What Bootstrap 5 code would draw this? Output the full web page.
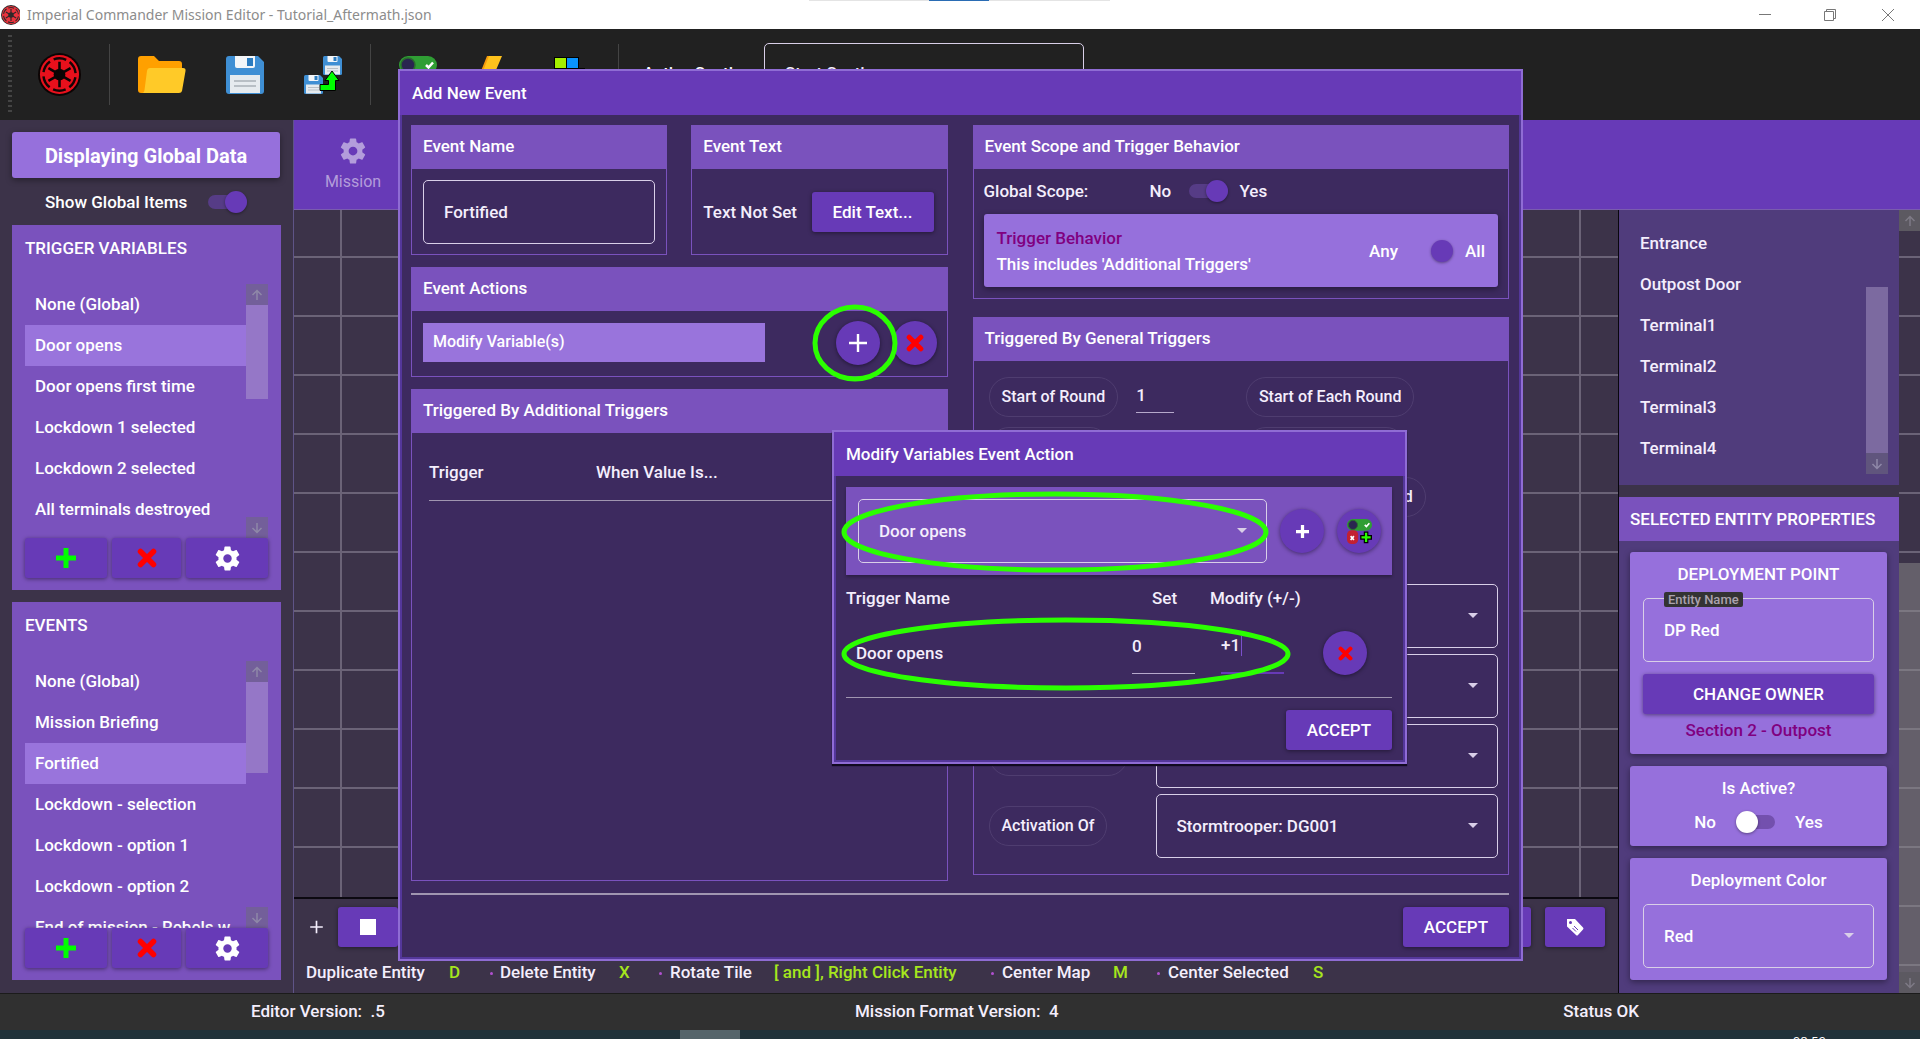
<!DOCTYPE html>
<html lang="en" data-bs-theme="dark">
<head>
<meta charset="utf-8">
<meta name="viewport" content="width=device-width, initial-scale=1">
<title>Imperial Commander Mission Editor</title>
<link href="https://cdn.jsdelivr.net/npm/bootstrap@5.3.0/dist/css/bootstrap.min.css" rel="stylesheet">
<style>
:root{--deep:#673ab7;--mid:#7a52bd;--lite:#9670dc;--panel:#3d2a5f;--base:#3c3349;--side:#503c7c}
body{font-family:Roboto,"Liberation Sans",sans-serif;font-weight:500;font-size:17px;line-height:24px;color:#f4eefc;background:var(--base);min-height:100vh;overflow:hidden}
button,input,select{font:inherit;color:inherit}
svg{display:block;flex:none}
.titlebar{height:29px;background:#fff;color:#8c8c8c;font:400 14px/24px "Noto Sans","Open Sans",sans-serif;gap:7px;padding-right:3px}
.tb-peek{left:809px;top:0;width:301px;height:1px;background:#e4e4e4}
.tb-peek i{position:absolute;left:120px;width:60px;height:1px;background:#2a6cb4}
.winbtn{width:58px;height:29px;background:none;border:0;padding:0;color:#777;margin-left:-7px}
.toolbar{height:91px;background:#212121}
.grip{width:4px;height:80px;background:repeating-linear-gradient(#444 0 2px,transparent 2px 5px)}
.vsep{width:1px;height:61px;background:#444}
.iconbtn{background:none;border:0;padding:0}
.tool-home{width:97px;padding-right:2px}
.tool-files{width:260px;padding:0 28px}
.tool-items{width:247px;padding:0 33px 0 28px}
.outlined{border:1px solid #d9cfe8;border-radius:5px;background:transparent;height:64px;padding:0 20px;width:100%;outline:0;display:block;appearance:none}
.pick{position:relative;display:block}
.pick::after{content:"";position:absolute;right:20px;top:50%;margin-top:-3px;border:5px solid transparent;border-top-color:#d9cfe8;border-bottom:0}
.pick option{background:var(--panel)}
.section-pick{width:320px}
.section-pick .outlined{padding-bottom:4px}
.section-label{width:145px;padding:0 0 4px 24px}
.left-side{width:294px;border-right:1px solid #5f5487;padding:12px 13px 0 12px}
.raised{background:var(--lite);border-radius:3px;box-shadow:0 2px 6px rgba(0,0,0,.4)}
.btn-deep{background:var(--deep);border:0;border-radius:3px;height:40px;color:#fff;box-shadow:0 1px 4px rgba(0,0,0,.45);padding:0 21px}
.round{width:44px;height:44px;border-radius:50%;padding:0;flex:none}
.banner{height:46px;font-size:20px;font-weight:700;color:#fff;padding-top:2px}
.global-row{height:47px;padding:0 33px}
.tog{appearance:none;position:relative;width:39px;height:22px;margin:0;flex:none}
.tog::before{content:"";position:absolute;left:0;right:0;top:4px;height:14px;border-radius:7px;background:#563c86}
.tog::after{content:"";position:absolute;top:0;left:0;width:22px;height:22px;border-radius:50%;background:#fff;box-shadow:0 1px 3px rgba(0,0,0,.4)}
.tog:checked::after{left:17px;background:var(--deep)}
.tog-off::before{background:#7350ae}
.tog-bare::before{background:transparent}
.box{width:269px;background:var(--mid);color:#fff;margin-bottom:12px;padding-bottom:12px}
.box-title{height:46px;padding:0 13px;color:#fff;font-size:17px}
.listarea{margin:13px 13px 0;height:254px;overflow:hidden}
.listarea-b{height:267px}
.entry{height:41px;padding:0 10px;white-space:nowrap;overflow:hidden;line-height:40px}
.entry.sel{background:#9974dc}
.sbar{width:22px;flex:none}
.sbtn{height:21px;background:rgba(110,105,125,.55);color:#8f88a8}
.sthumb{background:rgba(190,175,215,.4)}
.rowbtns{gap:5px;padding:0 13px}
.wide-b{width:82px}
.tabs{height:90px;background:var(--deep);color:#b39ddb;font-weight:400;font-size:16px;border-bottom:1px solid #7a5cae}
.tab-item{width:118px;gap:4px}
.gridmap{background-color:var(--base);background-image:linear-gradient(#6b6377 2px,transparent 2px),linear-gradient(90deg,#6b6377 2px,transparent 2px);background-size:59px 59px;background-position:46px 46px;border-bottom:2px solid #0c0911}
.canvas-tools{height:56px;padding:0 13px 0 15px;gap:14px}
.canvas-tools .btn-deep{width:60px}
.strip{width:21px;background-color:var(--base);background-image:linear-gradient(#6b6377 2px,transparent 2px);background-size:59px 59px;background-position:0 46px}
.strip .thumb2{background:rgba(140,140,140,.5)}
.sgrey{height:21px;background:#5c5961;color:#7e7a86}
.right-side{width:281px;border-left:1px solid #08060c}
.side-sec{background:var(--side)}
.side-list{height:275px;padding:13px 11px 11px}
.side-title{height:44px;background:var(--mid);padding:0 11px 1px;color:#fff}
.side-cards{padding:11px 12px 0 11px;gap:12px}
.side-card{padding:10px 13px 12px 13px}
.keys{height:38px;padding:0 0 4px 12px}
.keys b{color:#a6e61d;font-weight:500}
.keys i{width:3px;height:3px;border-radius:50%;background:#b050d0;margin-top:2px}
.tagline{position:absolute;left:21px;top:-2px;background:#333;color:#aaa2ad;font-size:13px;line-height:15px;padding:0 4px;border-radius:2px}
.plum{color:#800080}
.statusbar{height:37px;background:#303030;border-top:1px solid #1b1b1b;padding-bottom:2px}
.taskbar{height:9px;background:#21323a;overflow:hidden;position:relative}
.taskbar i{position:absolute;left:680px;width:60px;height:9px;background:#56646a}
.taskbar span{position:absolute;right:94px;top:4px;font:400 13px/15px "Open Sans",sans-serif;color:#fff}
.win{position:absolute;background:var(--panel);border:2px solid #8f6cd4;box-shadow:inset 0 0 0 2px #54379a}
.win-main{left:398px;right:397px;top:69px}
.win-sub{left:832px;top:430px;width:575px;box-shadow:inset 0 0 0 2px #54379a,0 2px 1px #110a20}
.win-head{height:44px;background:var(--deep);padding:0 12px 1px;color:#fff}
.win-body{padding:10px 12px 12px 11px}
.grp{border:1px solid var(--mid)}
.grp-title{height:43px;background:var(--mid);padding:0 11px 3px;color:#fff}
.half{flex:1 1 0}
.chip{height:40px;border:1px solid #4f3d70;border-radius:20px;background:none;padding:0 12px;font-size:16px;white-space:nowrap}
.chip-cell{width:51%;padding-left:5px}
.chip-cell-sm{width:172px;padding-left:5px}
.picked{background:#9974dc;width:342px;height:39px;line-height:38px;padding-left:10px;font-size:16px;color:#fff}
.uline{background:none;border:0;border-bottom:1px solid #b6a9cb;padding:0;outline:0}
.uline-lg{width:63px;height:54px;padding-bottom:2px;margin-bottom:12px}
.active-field{position:relative;margin-left:26px}
.active-field .uline{border-bottom:2px solid var(--deep)}
.active-field::after{content:"";position:absolute;left:20px;top:16px;width:1px;height:20px;background:#7b50cc}
.bar2{height:2px;background:#a095b0;margin:12px 0}
.bar1{height:1px;background:#a095b0;margin:12px 0}
.ring{position:absolute;pointer-events:none;overflow:visible}
.ring ellipse{fill:none;stroke:#2bff00;stroke-width:5}
.ring-a{right:50px;top:-6px}
.ring-b{left:7px;top:60px}
.ring-c{left:7px;top:186px}
</style>
<script src="https://cdn.jsdelivr.net/npm/bootstrap@5.3.0/dist/js/bootstrap.bundle.min.js"></script>
</head>
<body class="d-flex flex-column position-relative">
<svg width="0" height="0" class="position-absolute">
<symbol id="gear" viewBox="0 0 24 24"><path fill="currentColor" d="M12,15.5A3.5,3.5 0 0,1 8.5,12A3.5,3.5 0 0,1 12,8.5A3.5,3.5 0 0,1 15.5,12A3.5,3.5 0 0,1 12,15.5M19.43,12.97C19.47,12.65 19.5,12.33 19.5,12C19.5,11.67 19.47,11.34 19.43,11L21.54,9.37C21.73,9.22 21.78,8.95 21.66,8.73L19.66,5.27C19.54,5.05 19.27,4.96 19.05,5.05L16.56,6.05C16.04,5.66 15.5,5.32 14.87,5.07L14.5,2.42C14.46,2.18 14.25,2 14,2H10C9.75,2 9.54,2.18 9.5,2.42L9.13,5.07C8.5,5.32 7.96,5.66 7.44,6.05L4.95,5.05C4.73,4.96 4.46,5.05 4.34,5.27L2.34,8.73C2.21,8.95 2.27,9.22 2.46,9.37L4.57,11C4.53,11.34 4.5,11.67 4.5,12C4.5,12.33 4.53,12.65 4.57,12.97L2.46,14.63C2.27,14.78 2.21,15.05 2.34,15.27L4.34,18.73C4.46,18.95 4.73,19.03 4.95,18.95L7.44,17.94C7.96,18.34 8.5,18.68 9.13,18.93L9.5,21.58C9.54,21.82 9.75,22 10,22H14C14.25,22 14.46,21.82 14.5,21.58L14.87,18.93C15.5,18.67 16.04,18.34 16.56,17.94L19.05,18.95C19.27,19.03 19.54,18.95 19.66,18.73L21.66,15.27C21.78,15.05 21.73,14.78 21.54,14.63L19.43,12.97Z"/></symbol>
<symbol id="plus" viewBox="0 0 20 20"><path d="M10 0V20M0 10H20" stroke="currentColor" stroke-width="5"/></symbol>
<symbol id="thin" viewBox="0 0 20 20"><path d="M10 1V19M1 10H19" stroke="currentColor" stroke-width="2.400"/></symbol>
<symbol id="cross" viewBox="0 0 20 20"><path d="M3.500 3.500L16.500 16.500M16.500 3.500L3.500 16.500" stroke="red" stroke-width="5.500" stroke-linecap="round"/></symbol>
<symbol id="up" viewBox="0 0 12 12"><path d="M6 11V2M1.500 6L6 1.500L10.500 6" fill="none" stroke="currentColor" stroke-width="1.500"/></symbol>
<symbol id="down" viewBox="0 0 12 12"><path d="M6 1V10M1.500 6L6 10.500L10.500 6" fill="none" stroke="currentColor" stroke-width="1.500"/></symbol>
<symbol id="disk" viewBox="0 0 38 38"><path fill="#3f8fd4" d="M3 0H32L38 6V35Q38 38 35 38H3Q0 38 0 35V3Q0 0 3 0Z"/><path fill="#f3f6f9" d="M9 0H29V10Q29 12 27 12H11Q9 12 9 10Z"/><path fill="#2c7cc0" d="M21 2H27V10H21Z"/><path fill="#e6ebef" d="M4 19H34V37H4Z"/><path stroke="#a9b1b8" stroke-width="1.500" d="M8 25H30M8 30H30"/></symbol>
<symbol id="emblem" viewBox="0 0 44 44"><circle cx="22" cy="22" r="22" fill="#0c0404"/><circle cx="22" cy="22" r="20" fill="#e8101c"/><circle cx="22" cy="22" r="16.500" fill="none" stroke="#140506" stroke-width="2.500" stroke-dasharray="13 4.280" stroke-dashoffset="6.500" transform="rotate(30 22 22)"/><circle cx="22" cy="22" r="6" fill="#0c0404"/><path stroke="#0c0404" stroke-width="2.600" d="M22 9V35M10.700 15.500L33.300 28.500M10.700 28.500L33.300 15.500"/></symbol>
<symbol id="toggler" viewBox="0 0 38 38"><rect width="38" height="18" rx="9" fill="#2f9e34"/><circle cx="9" cy="9" r="7" fill="#2a2550" stroke="#2b6b2e" stroke-width="1.500"/><path d="M27 9L29.500 11.500L34 6.500" fill="none" stroke="#fff" stroke-width="2.500"/><rect x="0" y="17" width="17" height="21" rx="7" fill="#c32032"/><path d="M5.500 26L10.500 32M10.500 26L5.500 32" stroke="#fff" stroke-width="2.500"/><path d="M29 19V37M20 28H38" stroke="#000" stroke-width="7"/><path d="M29 21V35M22 28H36" stroke="#2bff00" stroke-width="3.500"/></symbol>
</svg>

<header class="titlebar d-flex align-items-center position-relative">
  <svg width="20" height="20"><use href="#emblem" x="1" width="20" height="20" opacity=".85"/></svg>
  <span class="flex-grow-1">Imperial Commander Mission Editor - Tutorial_Aftermath.json</span>
  <div class="tb-peek position-absolute"><i></i></div>
  <button class="winbtn d-flex align-items-center justify-content-center" aria-label="Minimize"><svg width="12" height="12"><path d="M0 5.500H12" stroke="currentColor"/></svg></button>
  <button class="winbtn d-flex align-items-center justify-content-center ms-0" aria-label="Restore"><svg width="12" height="12" fill="none" stroke="currentColor"><path d="M.5 2.500H9.500V11.500H.5ZM2.500 2V.5H11.500V9.500H10"/></svg></button>
  <button class="winbtn d-flex align-items-center justify-content-center" aria-label="Close"><svg width="12" height="12" stroke="currentColor"><path d="M0 0L12 12M12 0L0 12"/></svg></button>
</header>

<nav class="toolbar d-flex align-items-center ps-2">
  <div class="grip"></div>
  <div class="tool-home d-flex align-items-center justify-content-center"><button class="iconbtn" aria-label="Home"><svg width="43" height="43"><use href="#emblem"/></svg></button></div>
  <div class="vsep"></div>
  <div class="tool-files d-flex align-items-center justify-content-between">
    <button class="iconbtn" aria-label="Open"><svg width="48" height="38" viewBox="0 0 48 38"><path fill="#ffa000" d="M3 0H16L21 5H41Q44 5 44 8V20L8 37H3Q0 37 0 34V3Q0 0 3 0Z"/><path fill="#ffca28" d="M12 12H45Q48 12 47.500 15L44 35Q43.500 37 41 37H4Q6 37 6.500 34L9 15Q9.500 12 12 12Z"/></svg></button>
    <button class="iconbtn" aria-label="Save"><svg width="38" height="38"><use href="#disk"/></svg></button>
    <button class="iconbtn" aria-label="Save as"><svg width="38" height="38"><use href="#disk" x="19" width="19" height="19"/><use href="#disk" y="19" width="19" height="19"/><path fill="#0f0" stroke="#000" d="M16 28.500H24.500V24.500H21L28 15L35 24.500H31.500V34.500H16Z"/></svg></button>
  </div>
  <div class="vsep"></div>
  <div class="tool-items d-flex align-items-center justify-content-between">
    <button class="iconbtn" aria-label="Triggers"><svg width="38" height="38"><use href="#toggler"/></svg></button>
    <button class="iconbtn" aria-label="Events"><svg width="30" height="38"><path fill="#f59a0c" d="M9 0H13L5 20H1ZM16 13H29L26 16H14Z"/><path fill="#ffc21c" d="M11 0H24L18 14H28L6 38L12 20H3Z"/></svg></button>
    <button class="iconbtn" aria-label="Tiles"><svg width="36" height="38"><path fill="#000" d="M5 1H30V12H36V26H5Z"/><path fill="#a6f000" d="M6 2H17V12H6Z"/><path fill="#0a94ff" d="M18 2H29V12H18Z"/><path fill="#f33" d="M6 14H17V25H6Z"/></svg></button>
  </div>
  <div class="vsep"></div>
  <label for="actsec" class="section-label text-white">Active Section:</label>
  <span class="pick section-pick"><select id="actsec" class="outlined"><option>Start Section</option></select></span>
</nav>

<main class="d-flex flex-grow-1 align-items-stretch">
  <aside class="left-side flex-shrink-0 d-flex flex-column">
    <div class="raised banner d-flex align-items-center justify-content-center">Displaying Global Data</div>
    <div class="global-row d-flex align-items-center justify-content-between"><label for="sgi" class="text-white">Show Global Items</label><input id="sgi" type="checkbox" class="tog" checked></div>
    <section class="box">
      <h2 class="box-title d-flex align-items-center m-0">TRIGGER VARIABLES</h2>
      <div class="listarea d-flex">
        <div class="flex-grow-1 overflow-hidden">
          <div class="entry">None (Global)</div><div class="entry sel">Door opens</div><div class="entry">Door opens first time</div><div class="entry">Lockdown 1 selected</div><div class="entry">Lockdown 2 selected</div><div class="entry">All terminals destroyed</div>
        </div>
        <div class="sbar d-flex flex-column justify-content-between"><div><div class="sbtn d-flex align-items-center justify-content-center"><svg width="12" height="12"><use href="#up"/></svg></div><div class="sthumb" style="height:94px"></div></div><div class="sbtn d-flex align-items-center justify-content-center"><svg width="12" height="12"><use href="#down"/></svg></div></div>
      </div>
      <div class="rowbtns d-flex">
        <button class="btn-deep wide-b p-0" style="color:#0f0" aria-label="Add"><svg width="20" height="20" class="mx-auto"><use href="#plus"/></svg></button>
        <button class="btn-deep p-0 flex-grow-1" aria-label="Remove"><svg width="20" height="20" class="mx-auto"><use href="#cross"/></svg></button>
        <button class="btn-deep wide-b p-0" aria-label="Settings"><svg width="29" height="29" class="mx-auto"><use href="#gear"/></svg></button>
      </div>
    </section>
    <section class="box">
      <h2 class="box-title d-flex align-items-center m-0">EVENTS</h2>
      <div class="listarea listarea-b d-flex">
        <div class="flex-grow-1 overflow-hidden">
          <div class="entry">None (Global)</div><div class="entry">Mission Briefing</div><div class="entry sel">Fortified</div><div class="entry">Lockdown - selection</div><div class="entry">Lockdown - option 1</div><div class="entry">Lockdown - option 2</div><div class="entry">End of mission - Rebels w</div>
        </div>
        <div class="sbar d-flex flex-column justify-content-between"><div><div class="sbtn d-flex align-items-center justify-content-center"><svg width="12" height="12"><use href="#up"/></svg></div><div class="sthumb" style="height:91px"></div></div><div class="sbtn d-flex align-items-center justify-content-center"><svg width="12" height="12"><use href="#down"/></svg></div></div>
      </div>
      <div class="rowbtns d-flex">
        <button class="btn-deep wide-b p-0" style="color:#0f0" aria-label="Add"><svg width="20" height="20" class="mx-auto"><use href="#plus"/></svg></button>
        <button class="btn-deep p-0 flex-grow-1" aria-label="Remove"><svg width="20" height="20" class="mx-auto"><use href="#cross"/></svg></button>
        <button class="btn-deep wide-b p-0" aria-label="Settings"><svg width="29" height="29" class="mx-auto"><use href="#gear"/></svg></button>
      </div>
    </section>
  </aside>

  <div class="flex-grow-1 d-flex flex-column">
    <div class="tabs d-flex"><div class="tab-item d-flex flex-column align-items-center justify-content-center"><svg width="30" height="30"><use href="#gear"/></svg><span>Mission</span></div></div>
    <div class="flex-grow-1 d-flex">
      <div class="flex-grow-1 d-flex flex-column">
        <div class="gridmap flex-grow-1"></div>
        <div class="canvas-tools d-flex align-items-center">
          <svg width="15" height="14"><use href="#thin"/></svg>
          <button class="btn-deep" aria-label="Crate"><svg width="16" height="16" class="mx-auto"><path fill="#fff" d="M0 0H16V16H0Z"/></svg></button>
          <button class="btn-deep ms-auto" aria-label="Door"></button>
          <button class="btn-deep" aria-label="Tag"><svg width="18" height="18" class="mx-auto"><path fill="#fff" d="M1 1H9L17 9.500Q18 10.500 17 11.500L12 17Q11 18 10 17L1 8.500Z"/><circle cx="4.500" cy="4.500" r="1.500" fill="#673ab7"/><path stroke="#673ab7" d="M8 8L12 12M6.500 10L10 13.500"/></svg></button>
        </div>
        <div class="keys d-flex align-items-center">
          <span style="width:143px">Duplicate Entity</span><b style="width:41px">D</b><i></i><span style="width:119px;margin-left:7px">Delete Entity</span><b style="width:40px">X</b><i></i><span style="width:104px;margin-left:8px">Rotate Tile</span><b style="width:217px">[ and ], Right Click Entity</b><i></i><span style="width:111px;margin-left:8px">Center Map</span><b style="width:44px">M</b><i></i><span style="width:145px;margin-left:8px">Center Selected</span><b>S</b>
        </div>
      </div>
      <div class="right-side d-flex flex-column">
        <div class="side-sec side-list d-flex">
          <div class="flex-grow-1"><div class="entry">Entrance</div><div class="entry">Outpost Door</div><div class="entry">Terminal1</div><div class="entry">Terminal2</div><div class="entry">Terminal3</div><div class="entry">Terminal4</div></div>
          <div class="sbar d-flex flex-column justify-content-end"><div class="sthumb" style="height:166px"></div><div class="sbtn d-flex align-items-center justify-content-center"><svg width="12" height="12"><use href="#down"/></svg></div></div>
        </div>
        <div style="height:12px;background:var(--base)"></div>
        <div class="side-title d-flex align-items-center text-nowrap">SELECTED ENTITY PROPERTIES</div>
        <div class="side-sec side-cards flex-grow-1 d-flex flex-column">
          <div class="raised side-card text-center text-white">
            <div class="mb-2">DEPLOYMENT POINT</div>
            <div class="position-relative pt-1" style="margin-bottom:12px"><input id="ename" class="outlined" value="DP Red"><label for="ename" class="tagline">Entity Name</label></div>
            <button class="btn-deep w-100 mb-1">CHANGE OWNER</button>
            <div class="plum">Section 2 - Outpost</div>
          </div>
          <div class="raised side-card text-center text-white">
            <div style="height:34px">Is Active?</div>
            <div class="d-flex align-items-center justify-content-center" style="gap:20px"><span>No</span><input type="checkbox" class="tog tog-off" aria-label="Is active"><span>Yes</span></div>
          </div>
          <div class="raised side-card text-center text-white">
            <label for="dcol" class="d-block" style="margin-bottom:12px">Deployment Color</label>
            <span class="pick"><select id="dcol" class="outlined"><option>Red</option></select></span>
          </div>
        </div>
      </div>
      <div class="strip d-flex flex-column"><div class="sgrey d-flex align-items-center justify-content-center"><svg width="12" height="12"><use href="#up"/></svg></div><div class="flex-grow-1"></div><div class="thumb2" style="height:409px"></div><div class="sgrey d-flex align-items-center justify-content-center"><svg width="12" height="12"><use href="#down"/></svg></div></div>
    </div>
  </div>
</main>

<footer>
  <div class="statusbar d-flex align-items-center"><span style="width:855px;padding-left:251px">Editor Version:&nbsp; .5</span><span>Mission Format Version:&nbsp; 4</span><span class="ms-auto" style="padding-right:281px">Status OK</span></div>
  <div class="taskbar"><i></i><span>08:59</span></div>
</footer>

<div class="win win-main">
  <div class="win-head d-flex align-items-center">Add New Event</div>
  <div class="win-body">
    <div class="d-flex" style="gap:25px">
      <div class="half d-flex flex-column" style="gap:12px">
        <div class="d-flex" style="gap:24px">
          <section class="grp half"><div class="grp-title d-flex align-items-center"><label for="evn">Event Name</label></div><div style="padding:11px 11px 10px"><input id="evn" class="outlined" value="Fortified"></div></section>
          <section class="grp half d-flex flex-column"><div class="grp-title d-flex align-items-center">Event Text</div><div class="d-flex align-items-center justify-content-between flex-grow-1" style="padding:0 13px 0 11px"><span>Text Not Set</span><button class="btn-deep">Edit Text...</button></div></section>
        </div>
        <section class="grp">
          <div class="grp-title d-flex align-items-center">Event Actions</div>
          <div class="d-flex align-items-center position-relative" style="height:65px;padding:0 10px 2px 11px">
            <div class="picked">Modify Variable(s)</div>
            <button class="btn-deep round ms-auto" aria-label="Add action"><svg width="20" height="20" class="mx-auto"><use href="#thin"/></svg></button>
            <button class="btn-deep round" aria-label="Remove action" style="margin-left:13px"><svg width="18" height="18" class="mx-auto"><use href="#cross"/></svg></button>
            <svg class="ring ring-a" width="84" height="78"><ellipse cx="42" cy="38" rx="40" ry="36"/></svg>
          </div>
        </section>
        <section class="grp" style="min-height:492px">
          <div class="grp-title d-flex align-items-center">Triggered By Additional Triggers</div>
          <div class="d-flex align-items-end" style="height:68px;margin:0 17px;padding-bottom:16px;border-bottom:1px solid #a095b0"><span style="width:167px">Trigger</span><span>When Value Is...</span></div>
        </section>
      </div>
      <div class="half d-flex flex-column" style="gap:18px">
        <section class="grp">
          <div class="grp-title d-flex align-items-center">Event Scope and Trigger Behavior</div>
          <div style="padding:8px 10px 11px">
            <div class="d-flex align-items-center" style="height:28px;margin-bottom:9px"><span style="width:166px">Global Scope:</span><span style="width:39px">No</span><input type="checkbox" class="tog" checked aria-label="Global scope"><span class="ps-2 ms-1">Yes</span></div>
            <div class="raised d-flex align-items-center justify-content-between" style="height:73px;padding:0 13px;color:#fff"><div style="line-height:26px"><div class="plum">Trigger Behavior</div><div>This includes 'Additional Triggers'</div></div><div class="d-flex align-items-center"><span style="width:45px">Any</span><input type="checkbox" class="tog tog-bare" checked aria-label="All triggers"><span class="ps-2 ms-1">All</span></div></div>
          </div>
        </section>
        <section class="grp" style="height:558px">
          <div class="grp-title d-flex align-items-center">Triggered By General Triggers</div>
          <div class="d-flex flex-column" style="padding:16px 10px;gap:10px">
            <div class="d-flex"><div class="chip-cell d-flex"><button class="chip">Start of Round</button><input class="uline" value="1" aria-label="Round" style="width:38px;height:36px;margin-left:18px"></div><button class="chip">Start of Each Round</button></div>
            <div class="d-flex"><div class="chip-cell"><button class="chip">End of Round</button></div><button class="chip">End of Each Round</button></div>
            <div class="d-flex"><div class="chip-cell"><button class="chip">Any Hero Wounded</button></div><button class="chip text-end" style="width:180px">All Heroes Wounded</button></div>
            <div class="d-flex"><div class="chip-cell"><button class="chip">Any Hero Defeated</button></div></div>
            <div class="d-flex flex-column" style="gap:6px;padding-top:7px">
              <div class="d-flex align-items-center"><div class="chip-cell-sm"><button class="chip">Ally Defeated</button></div><span class="pick flex-grow-1"><select class="outlined" aria-label="Ally"><option></option></select></span></div>
              <div class="d-flex align-items-center"><div class="chip-cell-sm"><button class="chip">Hero Wounded</button></div><span class="pick flex-grow-1"><select class="outlined" aria-label="Wounded"><option></option></select></span></div>
              <div class="d-flex align-items-center"><div class="chip-cell-sm"><button class="chip">Hero Withdraws</button></div><span class="pick flex-grow-1"><select class="outlined" aria-label="Withdraws"><option></option></select></span></div>
              <div class="d-flex align-items-center"><div class="chip-cell-sm"><button class="chip">Activation Of</button></div><span class="pick flex-grow-1"><select class="outlined" aria-label="Activation of"><option>Stormtrooper: DG001</option></select></span></div>
            </div>
          </div>
        </section>
      </div>
    </div>
    <div class="bar2"></div>
    <div class="text-end"><button class="btn-deep">ACCEPT</button></div>
  </div>
</div>

<div class="win win-sub">
  <div class="win-head d-flex align-items-center">Modify Variables Event Action</div>
  <div style="padding:11px 13px 12px 12px">
    <div class="d-flex align-items-center" style="background:var(--mid);height:88px;padding:0 11px 0 12px;gap:13px;box-shadow:0 2px 3px rgba(0,0,0,.3)">
      <span class="pick flex-grow-1"><select class="outlined" aria-label="Variable"><option>Door opens</option></select></span>
      <button class="btn-deep round" aria-label="Add variable"><svg width="13" height="13" class="mx-auto"><use href="#plus"/></svg></button>
      <button class="btn-deep round" aria-label="New trigger"><svg width="25" height="25" class="mx-auto"><use href="#toggler"/></svg></button>
    </div>
    <div class="d-flex align-items-center" style="height:46px"><span style="width:306px">Trigger Name</span><span style="width:58px">Set</span><span>Modify (+/-)</span></div>
    <div class="d-flex align-items-center" style="height:64px;padding-left:10px"><span style="width:276px">Door opens</span>
      <input class="uline uline-lg" value="0" aria-label="Set"><span class="active-field d-flex"><input class="uline uline-lg" value="+1" aria-label="Modify"></span>
      <button class="btn-deep round ms-auto" aria-label="Remove variable" style="margin-right:25px"><svg width="15" height="15" class="mx-auto"><use href="#cross"/></svg></button></div>
    <div class="bar1"></div>
    <div class="text-end"><button class="btn-deep">ACCEPT</button></div>
  </div>
  <svg class="ring ring-b" width="427" height="80"><ellipse cx="214" cy="40" rx="211" ry="38"/></svg>
  <svg class="ring ring-c" width="448" height="72"><ellipse cx="225" cy="36" rx="222" ry="34"/></svg>
</div>
</body>
</html>
